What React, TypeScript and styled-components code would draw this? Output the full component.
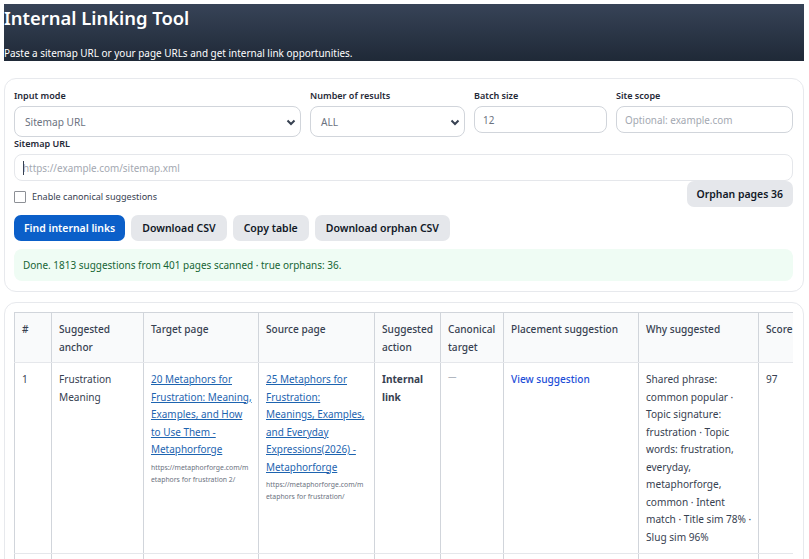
// App.tsx

import React from 'react';
import styled, { createGlobalStyle } from 'styled-components';

const GlobalStyle = createGlobalStyle`
  html, body {
    margin: 0;
    padding: 0;
    height: 559px;
    overflow: hidden;
    background: #ffffff;
    font-family: "Noto Sans", "Open Sans", sans-serif;
    color: #1f2937;
  }
  * { box-sizing: border-box; }
`;

const Page = styled.div`
  padding: 4px 5px 0 4px;
`;

const Hero = styled.header`
  height: 57px;
  background: linear-gradient(180deg, #374357 0%, #1f2937 100%);
  color: #ffffff;
  display: flex;
  flex-direction: column;
  justify-content: space-between;
`;

const Title = styled.h1`
  margin: 0;
  font-size: 18.4px;
  line-height: 28px;
  font-weight: 600;
`;

const Subtitle = styled.p`
  margin: 0 0 1px;
  font-size: 9.95px;
  line-height: 14px;
`;

const Card = styled.section<{ $top: number; $padTop: number }>`
  border: 1px solid #e7e9ed;
  border-radius: 12px;
  padding: ${(p) => p.$padTop}px 10px 10px 9px;
  background: #fff;
  margin-top: ${(p) => p.$top}px;
`;

const FormRow = styled.div`
  display: grid;
  grid-template-columns: 287px 155px 133px 177px;
  column-gap: 9px;
`;

const Field = styled.div`
  display: flex;
  flex-direction: column;
`;

const Label = styled.label`
  font-size: 9.05px;
  font-weight: 600;
  line-height: 13px;
  height: 17px;
  color: #1f2937;
`;

const SelectBox = styled.div`
  position: relative;
  height: 31px;
  border: 1px solid #d1d5db;
  border-radius: 8px;
  display: flex;
  align-items: center;
  padding-left: 10px;
  font-size: 10.15px;
  color: #6b7280;
  svg {
    position: absolute;
    right: 3px;
    top: 11px;
  }
`;

const Input = styled.input`
  display: block;
  height: 27px;
  width: 100%;
  border: 1px solid #e5e7eb;
  border-radius: 8px;
  padding: 0 8px;
  font: inherit;
  font-size: 9.9px;
  color: #6b7280;
  background: #fff;
  outline: none;
  &::placeholder { color: #a3a8b1; opacity: 1; }
`;

const BatchInput = styled(Input)`
  border-color: #d1d5db;
`;

const UrlLabel = styled(Label)`
  display: block;
`;

const UrlField = styled.div`
  position: relative;
`;

const Caret = styled.span`
  position: absolute;
  left: 9px;
  top: 7px;
  width: 1px;
  height: 14px;
  background: #374151;
`;

const OptionsRow = styled.div`
  display: flex;
  justify-content: space-between;
  height: 26px;
`;

const CheckLabel = styled.label`
  display: flex;
  align-items: center;
  gap: 6px;
  height: 17px;
  margin-top: 7px;
  font-size: 9.05px;
  color: #374151;
`;

const CheckBox = styled.span`
  display: block;
  width: 12px;
  height: 12px;
  border: 1px solid #8d9096;
  border-radius: 1px;
`;

const Button = styled.button<{ $primary?: boolean }>`
  height: 26px;
  border: 0;
  border-radius: 7px;
  padding: 0 ${(p) => (p.$primary ? 10 : 11)}px;
  font: inherit;
  font-size: ${(p) => (p.$primary ? 10.45 : 10.5)}px;
  font-weight: 600;
  white-space: nowrap;
  color: ${(p) => (p.$primary ? '#ffffff' : '#111827')};
  background: ${(p) => (p.$primary ? '#0b5fc9' : '#e5e7eb')};
`;

const OrphanButton = styled(Button)`
  padding: 0 10px;
  font-size: 10.45px;
`;

const Actions = styled.div`
  display: flex;
  gap: 6px;
  margin-top: 8px;
`;

const Status = styled.div`
  margin-top: 8px;
  height: 32px;
  border-radius: 8px;
  background: #effcf4;
  color: #166534;
  font-size: 9.97px;
  display: flex;
  align-items: center;
  padding-left: 9px;
`;

const TableWrap = styled.div`
  overflow: hidden;
`;

const Table = styled.table`
  border-collapse: collapse;
  table-layout: fixed;
  width: 810px;
  font-size: 10.1px;
  line-height: 17.5px;
  color: #374151;
`;

const Th = styled.th`
  background: #f9fafb;
  border: 1px solid #d1d5db;
  border-bottom-color: #e5e7eb;
  padding: 8px 5px 6px 7px;
  height: 50px;
  text-align: left;
  vertical-align: top;
  font-weight: 500;
`;

const Td = styled.td`
  border: 1px solid #d1d5db;
  border-top-color: #e5e7eb;
  border-bottom-color: #e5e7eb;
  padding: 8px 5px 7px 7px;
  height: 190px;
  vertical-align: top;
`;

const PageLink = styled.a`
  color: #1d64b0;
  font-size: 9.95px;
  text-decoration: underline;
`;

const PageUrl = styled.div`
  font-size: 6.85px;
  line-height: 12px;
  margin-top: 3px;
  padding-right: 2px;
  color: #6b7280;
  word-break: break-all;
`;

const ViewLink = styled.a`
  color: #1d4ed8;
  font-weight: 500;
`;

const Muted = styled.span`
  display: block;
  margin-top: -3px;
  font-size: 8.5px;
  color: #9ca3af;
`;

const Chevron = () => (
  <svg width="12" height="10" viewBox="0 0 12 10" fill="none">
    <path d="M2.5 2.5 L6 6 L9.5 2.5" stroke="#374151" strokeWidth="2" />
  </svg>
);

const columns = [37, 92, 115, 116, 66, 63, 135, 120, 66];
const headers = [
  '#',
  'Suggested anchor',
  'Target page',
  'Source page',
  'Suggested action',
  'Canonical target',
  'Placement suggestion',
  'Why suggested',
  'Score',
];

const App = () => (
  <Page>
    <GlobalStyle />
    <Hero>
      <Title>Internal Linking Tool</Title>
      <Subtitle>Paste a sitemap URL or your page URLs and get internal link opportunities.</Subtitle>
    </Hero>

    <Card $top={17} $padTop={10}>
      <FormRow>
        <Field>
          <Label>Input mode</Label>
          <SelectBox>
            Sitemap URL
            <Chevron />
          </SelectBox>
        </Field>
        <Field>
          <Label>Number of results</Label>
          <SelectBox>
            ALL
            <Chevron />
          </SelectBox>
        </Field>
        <Field>
          <Label>Batch size</Label>
          <BatchInput defaultValue="12" />
        </Field>
        <Field>
          <Label>Site scope</Label>
          <BatchInput placeholder="Optional: example.com" />
        </Field>
      </FormRow>
      <UrlLabel>Sitemap URL</UrlLabel>
      <UrlField>
        <Input placeholder="https://example.com/sitemap.xml" />
        <Caret />
      </UrlField>
      <OptionsRow>
        <CheckLabel>
          <CheckBox />
          Enable canonical suggestions
        </CheckLabel>
        <OrphanButton>Orphan pages 36</OrphanButton>
      </OptionsRow>
      <Actions>
        <Button $primary>Find internal links</Button>
        <Button>Download CSV</Button>
        <Button>Copy table</Button>
        <Button>Download orphan CSV</Button>
      </Actions>
      <Status>Done. 1813 suggestions from 401 pages scanned · true orphans: 36.</Status>
    </Card>

    <Card $top={10} $padTop={9}>
      <TableWrap>
        <Table>
          <colgroup>
            {columns.map((w, i) => (
              <col key={i} width={w} />
            ))}
          </colgroup>
          <thead>
            <tr>
              {headers.map((h) => (
                <Th key={h}>{h}</Th>
              ))}
            </tr>
          </thead>
          <tbody>
            <tr>
              <Td>1</Td>
              <Td>Frustration Meaning</Td>
              <Td>
                <PageLink href="#">20 Metaphors for Frustration: Meaning, Examples, and How to Use Them - Metaphorforge</PageLink>
                <PageUrl>https://metaphorforge.com/metaphors for frustration 2/</PageUrl>
              </Td>
              <Td>
                <PageLink href="#">25 Metaphors for Frustration: Meanings, Examples, and Everyday Expressions(2026) - Metaphorforge</PageLink>
                <PageUrl>https://metaphorforge.com/metaphors for frustration/</PageUrl>
              </Td>
              <Td>
                <strong>Internal link</strong>
              </Td>
              <Td>
                <Muted>—</Muted>
              </Td>
              <Td>
                <ViewLink>View suggestion</ViewLink>
              </Td>
              <Td>
                Shared phrase: common popular · Topic signature: frustration · Topic words: frustration, everyday, metaphorforge, common · Intent match · Title sim 78% · Slug sim 96%
              </Td>
              <Td>97</Td>
            </tr>
            <tr>
              <Td />
              <Td />
              <Td />
              <Td />
              <Td />
              <Td />
              <Td />
              <Td />
              <Td />
            </tr>
          </tbody>
        </Table>
      </TableWrap>
    </Card>
  </Page>
);

export default App;
